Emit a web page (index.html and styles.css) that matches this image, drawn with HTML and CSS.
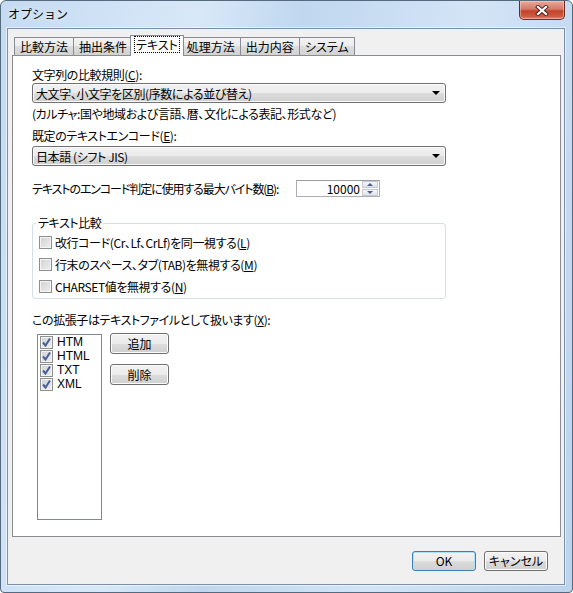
FILE: index.html
```html
<!DOCTYPE html>
<html lang="ja">
<head>
    <meta charset="UTF-8">
    <meta name="viewport" content="width=device-width, initial-scale=1.0">
    <title>オプション</title>
    <link rel="stylesheet" href="styles.css">
</head>
<body>
    <div class="window">
        <div class="titlebar">
            <span class="title">オプション</span>
            <button class="close-btn" aria-label="閉じる">
                <svg width="14" height="11" viewBox="0 0 14 11">
                    <path d="M3 2 L11 9 M11 2 L3 9" stroke="#4a2320" stroke-width="4" stroke-linecap="square" fill="none"/>
                    <path d="M3 2 L11 9 M11 2 L3 9" stroke="#ffffff" stroke-width="2.2" stroke-linecap="square" fill="none"/>
                </svg>
            </button>
        </div>

        <div class="client">
            <div class="tabs">
                <div class="tab">比較方法</div>
                <div class="tab">抽出条件</div>
                <div class="tab active"><span class="focus">テキスト</span></div>
                <div class="tab">処理方法</div>
                <div class="tab">出力内容</div>
                <div class="tab">システム</div>
            </div>

            <div class="tab-panel">
                <div class="field-label">文字列の比較規則(<u>C</u>):</div>
                <div class="combo">
                    <span>大文字、小文字を区別(序数による並び替え)</span>
                    <span class="arrow"></span>
                </div>
                <div class="note">(カルチャ:国や地域および言語、暦、文化による表記、形式など)</div>

                <div class="field-label gap-top">既定のテキストエンコード(<u>E</u>):</div>
                <div class="combo">
                    <span>日本語 (シフト JIS)</span>
                    <span class="arrow"></span>
                </div>

                <div class="byte-row">
                    <span class="byte-label">テキストのエンコード判定に使用する最大バイト数(<u>B</u>):</span>
                    <div class="num-box">
                        <span class="num-value">10000</span>
                        <div class="spin">
                            <span class="spin-btn"><span class="tri-up"></span></span>
                            <span class="spin-btn"><span class="tri-down"></span></span>
                        </div>
                    </div>
                </div>

                <fieldset class="group">
                    <legend>テキスト比較</legend>
                    <div class="check-row"><span class="check"></span><span>改行コード(Cr、Lf、CrLf)を同一視する(<u>L</u>)</span></div>
                    <div class="check-row"><span class="check"></span><span>行末のスペース、タブ(TAB)を無視する(<u>M</u>)</span></div>
                    <div class="check-row"><span class="check"></span><span>CHARSET値を無視する(<u>N</u>)</span></div>
                </fieldset>

                <div class="field-label ext-label">この拡張子はテキストファイルとして扱います(<u>X</u>):</div>
                <div class="ext-row">
                    <div class="listbox">
                        <div class="list-item"><span class="check"><svg width="11" height="11" viewBox="0 0 11 11"><path d="M2 5.5 L4.5 8.5 L9 1.5" stroke="#4b5f96" stroke-width="2" fill="none"/></svg></span><span>HTM</span></div>
                        <div class="list-item"><span class="check"><svg width="11" height="11" viewBox="0 0 11 11"><path d="M2 5.5 L4.5 8.5 L9 1.5" stroke="#4b5f96" stroke-width="2" fill="none"/></svg></span><span>HTML</span></div>
                        <div class="list-item"><span class="check"><svg width="11" height="11" viewBox="0 0 11 11"><path d="M2 5.5 L4.5 8.5 L9 1.5" stroke="#4b5f96" stroke-width="2" fill="none"/></svg></span><span>TXT</span></div>
                        <div class="list-item"><span class="check"><svg width="11" height="11" viewBox="0 0 11 11"><path d="M2 5.5 L4.5 8.5 L9 1.5" stroke="#4b5f96" stroke-width="2" fill="none"/></svg></span><span>XML</span></div>
                    </div>
                    <div class="side-buttons">
                        <button class="btn side">追加</button>
                        <button class="btn side">削除</button>
                    </div>
                </div>
            </div>

            <div class="footer">
                <button class="btn default">OK</button>
                <button class="btn">キャンセル</button>
            </div>
        </div>
    </div>
</body>
</html>
```

FILE: styles.css
```css
/* dialog frame */
body { margin: 0; background: #ffffff; font-family: "Noto Sans CJK JP", "Noto Sans", sans-serif; font-size: 12px; color: #000; }
.window {
    width: 573px;
    height: 593px;
    box-sizing: border-box;
    border: 1px solid #55697f;
    border-radius: 6px 6px 4px 4px;
    background: linear-gradient(100deg, #c5dbf2 0%, #d8e8f8 30%, #c0d7ef 45%, #d3e4f6 70%, #bcd3ec 100%);
    display: flex;
    flex-direction: column;
}
.titlebar { height: 27px; display: flex; align-items: flex-start; }
.title { padding: 6px 0 0 7px; line-height: 14px; color: #000; text-shadow: 0 0 6px #fff; }
.close-btn {
    margin-left: auto;
    margin-right: 7px;
    width: 46px;
    height: 19px;
    padding: 0;
    border: 1px solid #6b2a22;
    border-top: none;
    border-radius: 0 0 5px 5px;
    background: linear-gradient(#e9a99a 0%, #d47a66 45%, #c1432d 55%, #cf5a40 85%, #e08a6d 100%);
    box-shadow: inset 0 0 0 1px rgba(255, 220, 210, 0.45);
    display: flex;
    align-items: center;
    justify-content: center;
}
.close-btn svg { display: block; }

.client {
    margin: 0 7px 0 6px;
    height: 557px;
    box-sizing: border-box;
    border: 1px solid #7b91ab;
    box-shadow: 0 0 0 1px rgba(255, 255, 255, 0.55);
    background: #f0f0f0;
    padding: 6px 3px 0 4px;
}

/* tab strip */
.tabs { position: relative; z-index: 1; height: 20px; display: flex; align-items: flex-end; padding-left: 2px; }
.tab {
    height: 18px;
    box-sizing: border-box;
    padding: 1px 5px 0;
    line-height: 16px;
    border: 1px solid #898c95;
    border-bottom: none;
    margin-left: -1px;
    background: linear-gradient(#f3f3f3 0%, #ebebeb 50%, #dddddd 50%, #d2d2d2 100%);
    font-feature-settings: "palt";
    white-space: nowrap;
}
.tab:first-child { margin-left: 0; }
.tab.active {
    position: relative;
    height: 21px;
    margin: 0 -2px -1px -3px;
    padding: 1px 4px 0;
    background: #ffffff;
}
.focus { display: inline-block; outline: 1px dotted #000; outline-offset: 0; padding: 0 1px; line-height: 15px; }

/* panel */
.tab-panel {
    height: 482px;
    box-sizing: border-box;
    border: 1px solid #898c95;
    background: #ffffff;
    padding: 12px 0 0 19px;
    font-feature-settings: "palt";
    letter-spacing: -0.4px;
}
.field-label { line-height: 14px; }
.field-label.gap-top { margin-top: 8px; }
.note { line-height: 14px; margin-top: 4px; }
.combo {
    margin-top: 1px;
    width: 414px;
    height: 20px;
    box-sizing: border-box;
    border: 1px solid #707070;
    border-radius: 3px;
    background: linear-gradient(#f2f2f2 0%, #ebebeb 50%, #dddddd 50%, #cfcfcf 100%);
    box-shadow: inset 0 0 0 1px #fbfbfb;
    display: flex;
    align-items: center;
    justify-content: space-between;
    padding: 0 5px 0 3px;
}
.combo + .note { margin-top: 4px; }
.gap-top + .combo { margin-top: 3px; }
.arrow { width: 0; height: 0; border-left: 4px solid transparent; border-right: 4px solid transparent; border-top: 4px solid #000; }

.byte-row { margin-top: 14px; height: 17px; display: flex; align-items: center; }
.byte-label { width: 264px; flex: none; line-height: 14px; white-space: nowrap; letter-spacing: -1.1px; }
.num-box {
    width: 84px;
    height: 17px;
    box-sizing: border-box;
    border: 1px solid #abadb3;
    border-top-color: #9a9ca3;
    display: flex;
    background: #fff;
}
.num-value { flex: 1; text-align: right; line-height: 15px; padding-right: 2px; letter-spacing: 0; }
.spin { width: 16px; display: flex; flex-direction: column; gap: 1px; padding: 0 1px 0 0; }
.spin-btn {
    flex: 1;
    box-sizing: border-box;
    border: 1px solid #c6cbd3;
    background: linear-gradient(#f3f5f8, #dfe3ea);
    display: flex;
    align-items: center;
    justify-content: center;
}
.tri-up { border-left: 3px solid transparent; border-right: 3px solid transparent; border-bottom: 3px solid #4d6185; }
.tri-down { border-left: 3px solid transparent; border-right: 3px solid transparent; border-top: 3px solid #4d6185; }

/* group box */
.group {
    margin: 19px 0 0 0;
    width: 414px;
    box-sizing: border-box;
    border: 1px solid #d5dfe5;
    border-radius: 3px;
    padding: 1px 0 1px 6px;
    min-width: 0;
}
.group legend { line-height: 14px; padding: 0 2px; margin-left: -3px; }
.check-row { height: 22px; display: flex; align-items: center; gap: 3px; }
.check {
    width: 13px;
    height: 13px;
    box-sizing: border-box;
    border: 1px solid #8e8f8f;
    background: linear-gradient(135deg, #cfd2d6 0%, #eeeeee 100%);
    box-shadow: inset 0 0 0 1px #f4f4f4;
    flex: none;
    display: flex;
    align-items: center;
    justify-content: center;
}
.check svg { display: block; }

/* extension list */
.ext-label { margin-top: 14px; }
.ext-row { margin-top: 6px; display: flex; align-items: flex-start; gap: 8px; padding-left: 5px; }
.listbox {
    margin-top: 1px;
    width: 65px;
    height: 186px;
    box-sizing: border-box;
    border: 1px solid #828790;
    padding: 0 0 0 2px;
    background: #fff;
}
.list-item {
    height: 14px;
    display: flex;
    align-items: center;
    gap: 4px;
    line-height: 13px;
    font-family: "Liberation Sans", sans-serif;
    letter-spacing: 0;
}
.side-buttons { display: flex; flex-direction: column; gap: 10px; }

/* buttons */
.btn {
    font-family: inherit;
    font-size: 12px;
    height: 20px;
    padding: 0;
    box-sizing: border-box;
    border: 1px solid #707070;
    border-radius: 3px;
    background: linear-gradient(#f2f2f2 0%, #ebebeb 50%, #dddddd 50%, #cfcfcf 100%);
    box-shadow: inset 0 0 0 1px #fcfcfc;
    color: #000;
    line-height: 16px;
    font-feature-settings: "palt";
    letter-spacing: 0;
}
.btn.side { width: 59px; height: 21px; }
.btn.default { border-color: #3c7fb1; box-shadow: inset 0 0 0 1px #aee0f7; }
.footer { margin-top: 14px; display: flex; justify-content: flex-end; gap: 8px; padding-right: 13px; }
.footer .btn { width: 64px; }
```
